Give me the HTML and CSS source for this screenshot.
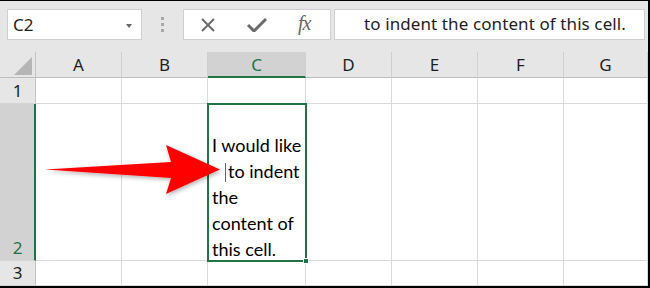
FILE: index.html
```html
<!DOCTYPE html>
<html lang="en">
<head>
    <meta charset="UTF-8">
    <title>Indent cell content</title>
    <link rel="stylesheet" href="styles.css">
</head>
<body>
    <div class="window">
        <!-- Formula bar -->
        <div class="toolbar">
            <div class="namebox">
                <span>C2</span>
                <span class="caret"></span>
            </div>
            <div class="grip"><i></i><i></i><i></i></div>
            <div class="fx-buttons">
                <svg class="icon" width="16" height="14" viewBox="0 0 16 14">
                    <path d="M2 1 L14 13 M14 1 L2 13" stroke="#6b6b6b" stroke-width="2" fill="none"/>
                </svg>
                <svg class="icon" width="20" height="14" viewBox="0 0 20 14">
                    <path d="M1 7 L7 13 L19 1" stroke="#6b6b6b" stroke-width="3" fill="none"/>
                </svg>
                <span class="fx">fx</span>
            </div>
            <div class="formula">to indent the content of this cell.</div>
        </div>

        <!-- Sheet -->
        <div class="sheet">
            <div class="corner"><span class="select-all"></span></div>
            <div class="col-head">A</div>
            <div class="col-head">B</div>
            <div class="col-head active">C</div>
            <div class="col-head">D</div>
            <div class="col-head">E</div>
            <div class="col-head">F</div>
            <div class="col-head">G</div>

            <div class="row-head">1</div>
            <div class="cell"></div>
            <div class="cell"></div>
            <div class="cell"></div>
            <div class="cell"></div>
            <div class="cell"></div>
            <div class="cell"></div>
            <div class="cell"></div>

            <div class="row-head active">2</div>
            <div class="cell"></div>
            <div class="cell"></div>
            <div class="cell selected">
                <span class="line">I would like</span>
                <span class="line indent"><span class="text-cursor"></span>to indent</span>
                <span class="line">the</span>
                <span class="line">content of</span>
                <span class="line last">this cell.</span>
                <span class="fill-handle"></span>
            </div>
            <div class="cell"></div>
            <div class="cell"></div>
            <div class="cell"></div>
            <div class="cell"></div>

            <div class="row-head">3</div>
            <div class="cell"></div>
            <div class="cell"></div>
            <div class="cell"></div>
            <div class="cell"></div>
            <div class="cell"></div>
            <div class="cell"></div>
            <div class="cell"></div>
        </div>

        <!-- Callout arrow -->
        <svg class="arrow" width="648" height="285" viewBox="0 0 648 285">
            <defs>
                <filter id="shadow" x="-10%" y="-30%" width="120%" height="160%">
                    <feDropShadow dx="1" dy="2" stdDeviation="2" flood-color="#000" flood-opacity="0.3"/>
                </filter>
            </defs>
            <path d="M45 168.5 L171 161 L166 144 L220 168.5 L166 193 L171 177 Z" fill="#ff0000" filter="url(#shadow)"/>
        </svg>
    </div>
</body>
</html>
```

FILE: styles.css
```css
body {
    margin: 0;
    background-color: #fff;
}

.window {
    position: relative;
    width: 648px;
    height: 285px;
    border-top: 1px solid #000;
    border-right: 2px solid #000;
    border-bottom: 2px solid #000;
    background-color: #e6e6e6;
    font-family: "Noto Sans", "Open Sans", sans-serif;
    color: #1e1e1e;
    overflow: hidden;
}

/* Formula bar */
.toolbar {
    height: 51px;
    box-sizing: border-box;
    padding: 8px 3px 0 7px;
    display: flex;
    align-items: flex-start;
}

.namebox {
    width: 135px;
    height: 31px;
    box-sizing: border-box;
    background-color: #fff;
    border: 1px solid #d0d0d0;
    display: flex;
    align-items: center;
    justify-content: space-between;
    padding: 0 9px 0 5px;
    font-size: 17px;
}

.caret {
    width: 0;
    height: 0;
    border-left: 3px solid transparent;
    border-right: 3px solid transparent;
    border-top: 4px solid #666;
    margin-top: 2px;
}

.grip {
    display: flex;
    flex-direction: column;
    gap: 3px;
    margin: 8px 0 0 19px;
}

.grip i {
    display: block;
    width: 3px;
    height: 3px;
    background-color: #a8a8a8;
}

.fx-buttons {
    width: 148px;
    height: 31px;
    box-sizing: border-box;
    margin-left: 19px;
    background-color: #fff;
    border: 1px solid #d0d0d0;
    display: flex;
    align-items: center;
    padding: 0 0 0 16px;
    gap: 31px;
}

.icon {
    display: block;
}

.fx {
    font-family: "Liberation Serif", "DejaVu Serif", serif;
    font-style: italic;
    font-size: 20px;
    color: #666;
    letter-spacing: -1px;
    padding-bottom: 2px;
}

.formula {
    flex: 1;
    height: 31px;
    box-sizing: border-box;
    margin-left: 3px;
    background-color: #fff;
    border: 1px solid #d0d0d0;
    padding: 2px 0 0 29px;
    font-size: 17px;
    letter-spacing: 0.1px;
    white-space: nowrap;
}

/* Sheet grid */
.sheet {
    display: grid;
    grid-template-columns: 36px 86px 86px 98px 86px 86px 86px 84px;
    grid-template-rows: 26px 26px 157px 25px;
}

.sheet > div {
    box-sizing: border-box;
}

.corner {
    position: relative;
    border-right: 1px solid #c4c4c4;
    border-bottom: 1px solid #bdbdbd;
}

.select-all {
    position: absolute;
    right: 3px;
    bottom: 2px;
    width: 0;
    height: 0;
    border-left: 18px solid transparent;
    border-bottom: 18px solid #b5b5b5;
}

.col-head {
    border-right: 1px solid #d0d0d0;
    border-bottom: 1px solid #bdbdbd;
    text-align: center;
    font-size: 17px;
    line-height: 25px;
}

.col-head.active {
    background-color: #d2d2d2;
    border-bottom: 2px solid #217346;
    color: #217346;
}

.row-head {
    border-right: 1px solid #c4c4c4;
    border-bottom: 1px solid #d4d4d4;
    display: flex;
    align-items: flex-end;
    justify-content: center;
    font-size: 17px;
    line-height: 25px;
}

.row-head.active {
    background-color: #d2d2d2;
    border-right: 2px solid #217346;
    color: #217346;
    padding-left: 1px;
}

.cell {
    background-color: #fff;
    border-right: 1px solid #dadada;
    border-bottom: 1px solid #dadada;
}

.cell.selected {
    position: relative;
    outline: 2px solid #217346;
    outline-offset: -1px;
    display: flex;
    flex-direction: column;
    justify-content: flex-end;
    padding: 0 0 0 4px;
    font-family: "Lato", "Noto Sans", sans-serif;
    font-size: 18px;
    line-height: 26px;
    color: #000;
}

.line {
    white-space: nowrap;
}

.line.indent {
    padding-left: 13px;
}

.line.last {
    margin-bottom: -2px;
}

.text-cursor {
    display: inline-block;
    width: 1px;
    height: 19px;
    background-color: #666;
    vertical-align: -4px;
    margin-right: 2px;
}

.fill-handle {
    position: absolute;
    right: -4px;
    bottom: -4px;
    width: 4px;
    height: 4px;
    background-color: #217346;
    border: 1px solid #fff;
}

/* Arrow overlay */
.arrow {
    position: absolute;
    top: 0;
    left: 0;
    pointer-events: none;
}
```
